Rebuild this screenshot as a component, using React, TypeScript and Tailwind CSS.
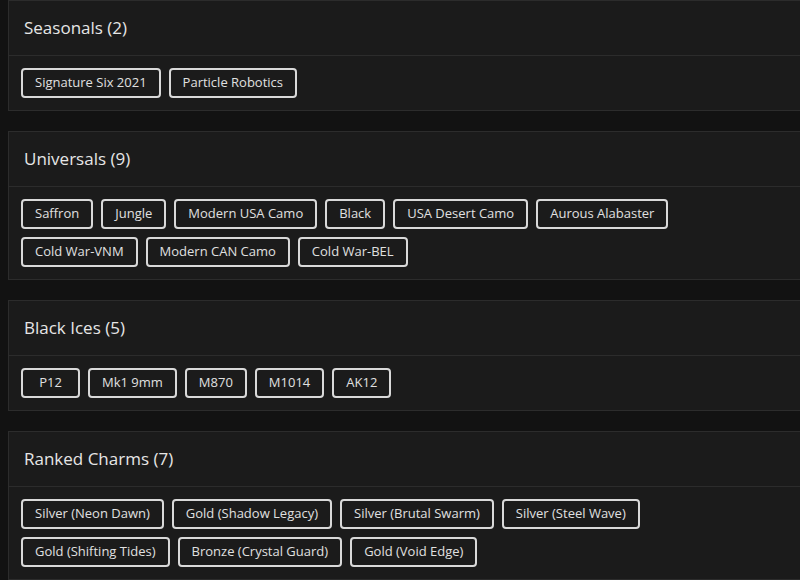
import React from "react";

const sections: { title: string; items: string[] }[] = [
  { title: "Seasonals (2)", items: ["Signature Six 2021", "Particle Robotics"] },
  {
    title: "Universals (9)",
    items: [
      "Saffron",
      "Jungle",
      "Modern USA Camo",
      "Black",
      "USA Desert Camo",
      "Aurous Alabaster",
      "Cold War-VNM",
      "Modern CAN Camo",
      "Cold War-BEL",
    ],
  },
  { title: "Black Ices (5)", items: ["P12", "Mk1 9mm", "M870", "M1014", "AK12"] },
  {
    title: "Ranked Charms (7)",
    items: [
      "Silver (Neon Dawn)",
      "Gold (Shadow Legacy)",
      "Silver (Brutal Swarm)",
      "Silver (Steel Wave)",
      "Gold (Shifting Tides)",
      "Bronze (Crystal Guard)",
      "Gold (Void Edge)",
    ],
  },
];

export default function App() {
  return (
    <div
      className="w-[800px] h-[580px] overflow-hidden bg-[#121212] pl-2"
      style={{ fontFamily: "'Open Sans', sans-serif" }}
    >
      <div className="flex flex-col gap-5 w-[810px]">
        {sections.map((s) => (
          <div key={s.title} className="border border-[#2c2c2c] bg-[#1b1b1b]">
            <div className="h-[55px] flex items-center px-[15px] border-b border-[#2c2c2c]">
              <h2 className="text-[17px] font-medium text-[#e6e6e6]">{s.title}</h2>
            </div>
            <div className="flex flex-wrap gap-2 px-3 py-3 w-[790px]">
              {s.items.map((it) => (
                <span
                  key={it}
                  className="h-[30px] min-w-[59px] flex items-center justify-center px-3 border-2 border-[#d9d9d9] rounded-[4px] text-[13px] text-[#e0e0e0]"
                >
                  {it}
                </span>
              ))}
            </div>
          </div>
        ))}
      </div>
    </div>
  );
}
